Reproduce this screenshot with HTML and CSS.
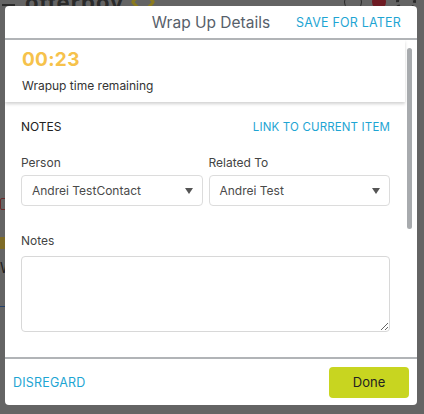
FILE: index.html
```html
<!DOCTYPE html>
<html>
<head>
    <title>Wrap Up Details</title>
    <link rel="stylesheet" href="styles.css">
</head>
<body>
    <div class="app">
        <div class="app-top">
            <span class="burger"></span>
            <span class="logo">otterboy</span>
            <span class="logo-mark"></span>
            <span class="spacer"></span>
            <span class="top-circle"></span>
            <span class="top-badge"></span>
            <span class="top-gear"></span>
        </div>
        <div class="app-side">
            <span class="side-info"></span>
            <span class="side-chip"></span>
            <span class="side-w">W</span>
            <span class="side-line"></span>
        </div>
    </div>

    <div class="modal">
        <div class="modal-header">
            <span class="modal-title">Wrap Up Details</span>
            <a class="link save-later">SAVE FOR LATER</a>
        </div>

        <div class="modal-body">
            <div class="body-content">
                <div class="timer-card">
                    <div class="timer">00:23</div>
                    <div class="timer-caption">Wrapup time remaining</div>
                </div>

                <div class="notes-section">
                    <div class="section-head">
                        <span class="section-title">NOTES</span>
                        <a class="link">LINK TO CURRENT ITEM</a>
                    </div>

                    <div class="field-row">
                        <div class="field">
                            <label>Person</label>
                            <div class="select">
                                <span>Andrei TestContact</span>
                                <span class="caret"></span>
                            </div>
                        </div>
                        <div class="field">
                            <label>Related To</label>
                            <div class="select">
                                <span>Andrei Test</span>
                                <span class="caret"></span>
                            </div>
                        </div>
                    </div>

                    <div class="field notes-field">
                        <label>Notes</label>
                        <textarea></textarea>
                    </div>
                </div>
            </div>
            <div class="scroll-track">
                <div class="scroll-thumb"></div>
            </div>
        </div>

        <div class="modal-footer">
            <a class="link disregard">DISREGARD</a>
            <button class="done">Done</button>
        </div>
    </div>
</body>
</html>
```

FILE: styles.css
```css
body {
    margin: 0;
    width: 424px;
    height: 414px;
    overflow: hidden;
    background: #646464;
    font-family: Inter, 'Noto Sans', sans-serif;
    position: relative;
}

/* dimmed app behind the dialog */
.app-top {
    display: flex;
    align-items: center;
    height: 12px;
    margin-top: -4px;
    padding: 0 2px;
    gap: 10px;
}

.burger {
    width: 13px;
    height: 8px;
    border-top: 2px solid #2b2b2b;
    border-bottom: 2px solid #2b2b2b;
    box-sizing: border-box;
}

.logo {
    font-size: 22px;
    font-weight: bold;
    color: #2a2a2a;
    letter-spacing: 1px;
}

.logo-mark {
    width: 12px;
    height: 12px;
    border: 3px solid #8a7a1e;
    border-radius: 3px;
    transform: rotate(45deg);
}

.spacer {
    flex: 1;
}

.top-circle {
    width: 16px;
    height: 16px;
    border: 1px solid #2a2a2a;
    border-radius: 50%;
}

.top-badge {
    width: 14px;
    height: 14px;
    background: #6d1a22;
    border-radius: 50%;
}

.top-gear {
    width: 14px;
    height: 14px;
    border: 3px dotted #2a2a2a;
    border-radius: 50%;
    margin-right: 6px;
}

.app-side {
    display: flex;
    flex-direction: column;
    align-items: flex-start;
    padding-top: 190px;
}

.side-info {
    width: 6px;
    height: 10px;
    border: 1px solid #6b2a2a;
    border-radius: 2px;
}

.side-chip {
    width: 5px;
    height: 12px;
    margin-top: 27px;
    background: #7d6a26;
}

.side-w {
    margin-top: 10px;
    font-size: 14px;
    color: #1d1d1d;
}

.side-line {
    width: 5px;
    height: 1px;
    margin-top: 30px;
    background: #23406a;
}

/* dialog */
.modal {
    position: absolute;
    top: 6px;
    left: 5px;
    width: 412px;
    height: 399px;
    background: white;
    border-radius: 4px;
    display: flex;
    flex-direction: column;
    overflow: hidden;
}

.modal-header {
    height: 32px;
    flex-shrink: 0;
    border-bottom: 2px solid #b1b4b7;
    display: flex;
    align-items: center;
    justify-content: flex-end;
    padding-right: 16px;
    position: relative;
}

.modal-title {
    position: absolute;
    left: 0;
    right: 0;
    text-align: center;
    font-size: 15.5px;
    color: #57606a;
}

.link {
    color: #1ea5d3;
    font-size: 11.5px;
    letter-spacing: 0.15px;
    position: relative;
    cursor: pointer;
}

.save-later {
    font-size: 12.5px;
    letter-spacing: 0.2px;
    padding-top: 1px;
}

.disregard {
    font-size: 12.5px;
    letter-spacing: 0.2px;
}

.modal-body {
    flex: 1;
    display: flex;
    overflow: hidden;
}

.body-content {
    width: 400px;
    flex-shrink: 0;
}

.scroll-track {
    flex: 1;
    padding: 8px 0 0 2px;
}

.scroll-thumb {
    width: 5px;
    height: 181px;
    border-radius: 3px;
    background: #a8abae;
}

.timer-card {
    height: 62px;
    box-sizing: border-box;
    padding: 8px 17px 0;
    box-shadow: 0 2px 3px rgba(0, 0, 0, 0.18);
}

.timer {
    font-size: 19px;
    font-weight: bold;
    color: #f6c24b;
    line-height: 24px;
    letter-spacing: 0.3px;
}

.timer-caption {
    font-size: 12px;
    color: #333;
    margin-top: 6px;
}

.notes-section {
    padding: 17px 15px 0 16px;
}

.section-head {
    display: flex;
    justify-content: space-between;
    align-items: center;
    font-size: 12px;
    color: #222;
}

.field-row {
    display: flex;
    gap: 6px;
    margin-top: 21px;
}

.field {
    flex: 1;
    display: flex;
    flex-direction: column;
}

label {
    font-size: 12px;
    color: #444;
    line-height: 15px;
    margin-bottom: 5px;
}

.select {
    height: 31px;
    box-sizing: border-box;
    border: 1px solid #dcdcdc;
    border-radius: 4px;
    display: flex;
    align-items: center;
    justify-content: space-between;
    padding: 0 9px 0 10px;
    font-size: 12px;
    color: #4a4a4a;
}

.caret {
    width: 0;
    height: 0;
    border-left: 4px solid transparent;
    border-right: 4px solid transparent;
    border-top: 6px solid #555;
}

.notes-field {
    margin-top: 27px;
}

.notes-field label {
    margin-bottom: 8px;
}

textarea {
    height: 76px;
    box-sizing: border-box;
    border: 1px solid #d8d8d8;
    border-radius: 4px;
    resize: vertical;
    font-family: inherit;
}

.modal-footer {
    height: 48px;
    flex-shrink: 0;
    box-sizing: border-box;
    border-top: 2px solid #b1b4b7;
    display: flex;
    align-items: center;
    justify-content: space-between;
    padding: 0 8px 0 8px;
}

.done {
    width: 80px;
    height: 31px;
    border: none;
    border-radius: 4px;
    background: #c8d520;
    color: #222;
    font-family: inherit;
    font-size: 13px;
    cursor: pointer;
}
```
